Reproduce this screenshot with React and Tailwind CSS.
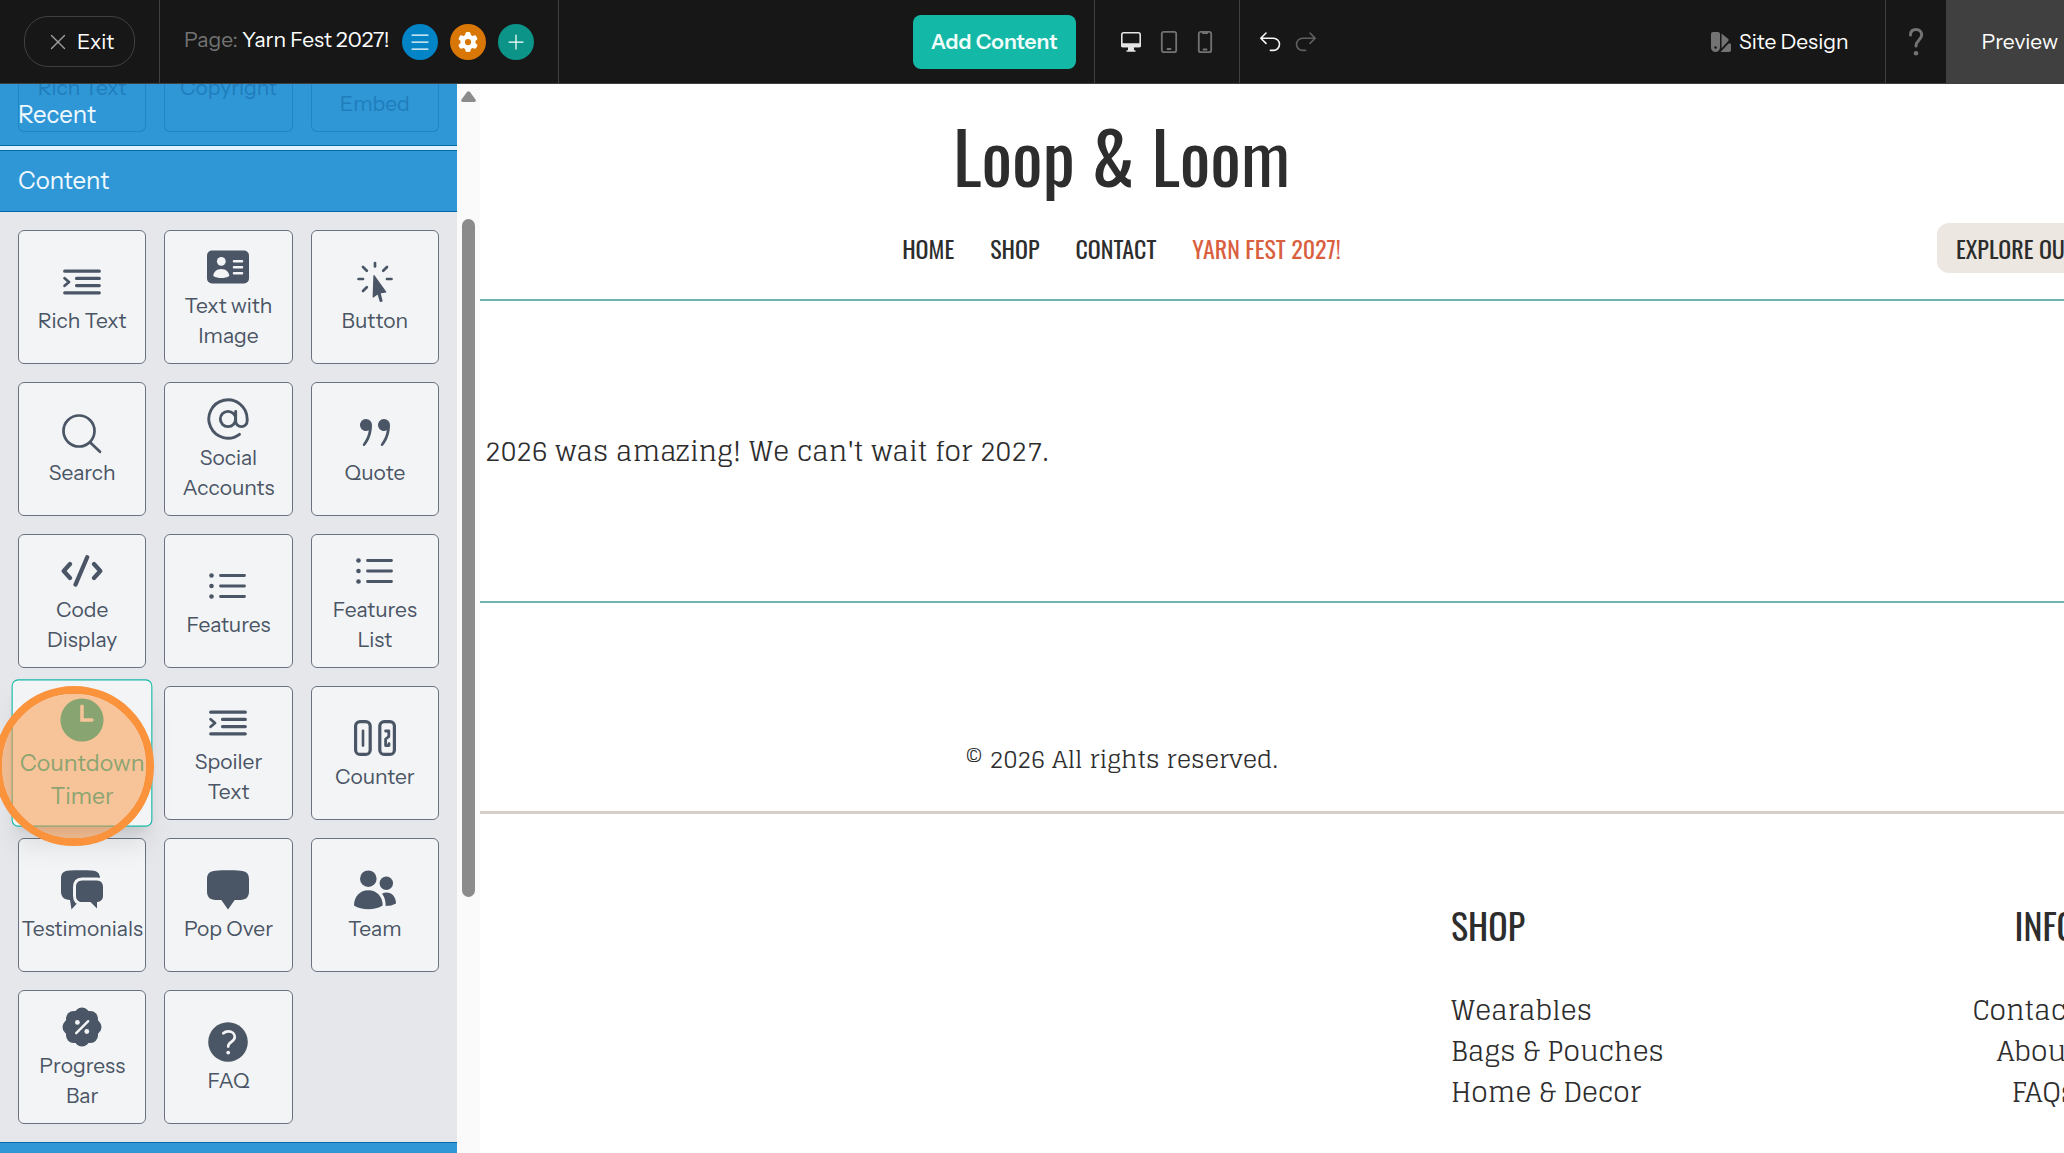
import React from 'react';
import clsx from 'clsx';
import { X, Menu, Plus, AtSign } from 'lucide-react';
import { FaGear } from 'react-icons/fa6';

const Icon = ({ children }) => (
    <svg viewBox="0 0 42 42" className="size-[42px]" fill="none" stroke="currentColor" strokeLinecap="round" strokeLinejoin="round" aria-hidden="true">
        {children}
    </svg>
);

const IndentIcon = () => (
    <Icon>
        <path d="M3.7 10.2h34.6M15.5 17.4h22.8M15.5 24.6h22.8M3.7 31.8h34.6" strokeWidth="3.2" />
        <path d="M3.6 17.2 8 21l-4.4 3.8" strokeWidth="2.8" />
    </Icon>
);

const CardIcon = () => (
    <Icon>
        <rect x="0" y="4.5" width="42" height="33" rx="5" fill="currentColor" stroke="none" />
        <circle cx="14.3" cy="15.3" r="4.4" className="fill-gray-100" stroke="none" />
        <path d="M6.3 30c0-4.2 3.6-7 8-7s8 2.8 8 7c-2.3 1.4-5 2-8 2s-5.7-.6-8-2z" className="fill-gray-100" stroke="none" />
        <path d="M27 15.2h8M27 21.2h8M27 27.2h8" strokeWidth="2.6" className="stroke-gray-100" />
    </Icon>
);

const ClickIcon = () => (
    <Icon>
        <path d="M21 2v3.5M4.5 18H9M33 18h4.5M9 6l3.8 3.8M33 6l-3.8 3.8M9 30l3.8-3.8" strokeWidth="2.7" />
        <path d="M20 14.5 31.8 31 26 32l2 8-1.6.5-2.5-8L19.2 36z" fill="currentColor" strokeWidth="1.2" />
    </Icon>
);

const SearchIcon = () => (
    <Icon>
        <circle cx="18" cy="18" r="15.5" strokeWidth="2.7" />
        <path d="M29.5 29.8 39 38.8" strokeWidth="2.7" />
    </Icon>
);

const AtIcon = () => <AtSign size={46} strokeWidth={1.5} />;

const QuoteIcon = () => (
    <Icon>
        <g fill="currentColor" stroke="none">
            <path d="M12 6a6 6 0 1 0 2.8 11.3c-.6 5-2.6 9-5.8 13.6a1.2 1.2 0 0 0 2 1.5C15.5 27.5 18 20 18 12a6 6 0 0 0-6-6z" />
            <path d="M30 6a6 6 0 1 0 2.8 11.3c-.6 5-2.6 9-5.8 13.6a1.2 1.2 0 0 0 2 1.5C33.5 27.5 36 20 36 12a6 6 0 0 0-6-6z" />
        </g>
    </Icon>
);

const CodeIcon = () => (
    <Icon>
        <path d="m9 14-6.3 7L9 28M33 14l6.3 7-6.3 7M26.2 7.2 14.5 34.6" strokeWidth="4.2" />
    </Icon>
);

const ListIcon = () => (
    <Icon>
        <path d="M13.5 10.5h24M13.5 21h24M13.5 31.5h24" strokeWidth="2.8" />
        <g fill="currentColor" stroke="none">
            <circle cx="4.5" cy="10.5" r="2.3" />
            <circle cx="4.5" cy="21" r="2.3" />
            <circle cx="4.5" cy="31.5" r="2.3" />
        </g>
    </Icon>
);

const ClockIcon = () => (
    <Icon>
        <circle cx="21" cy="21" r="19.6" fill="currentColor" stroke="none" />
        <path d="M21 8.5V21h9" strokeWidth="3.2" strokeLinejoin="miter" className="stroke-gray-100" />
    </Icon>
);

const CounterIcon = () => (
    <Icon>
        <rect x="1.6" y="4.6" width="14.6" height="32.8" rx="4.5" strokeWidth="3.2" />
        <rect x="25.8" y="4.6" width="14.6" height="32.8" rx="4.5" strokeWidth="3.2" />
        <path d="M9 13.8v14.8" strokeWidth="2.6" />
        <path d="M31.6 14h3.2v5.6l-3.2 2.4v6.6h3.4v-2" strokeWidth="2.8" />
    </Icon>
);

const ChatsIcon = () => (
    <Icon>
        <path d="M0 9.5C0 4 3 1.7 8.5 1.5c7.3-.3 14.7-.3 22 0C36 1.7 39 4 39 9.5v13c0 5.5-3 8.3-8.5 8.5H19l-8.5 9.5L9 31c-5.8-.2-9-3-9-8.5z" fill="currentColor" stroke="none" />
        <path d="M15 18c0-4 2.2-6.2 6.2-6.4 4.8-.2 9.8-.2 14.6 0 4 .2 6.2 2.4 6.2 6.4v8.5c0 4-2 6.2-6 6.4v6.6l-6.5-6.4h-8.3c-4-.2-6.2-2.4-6.2-6.4z" fill="currentColor" strokeWidth="6" className="stroke-gray-100" />
        <path d="M15 18c0-4 2.2-6.2 6.2-6.4 4.8-.2 9.8-.2 14.6 0 4 .2 6.2 2.4 6.2 6.4v8.5c0 4-2 6.2-6 6.4v6.6l-6.5-6.4h-8.3c-4-.2-6.2-2.4-6.2-6.4z" fill="currentColor" stroke="none" />
    </Icon>
);

const BubbleIcon = () => (
    <Icon>
        <path d="M0 10c0-5.5 3-8 8.5-8.3 8.3-.5 16.700-.5 25 0C39 2 42 4.5 42 10v12.5c0 5.5-3 8.2-8.5 8.5h-5.800L21 40.500 14.300 31H8.500C3 30.700 0 28 0 22.500z" fill="currentColor" stroke="none" />
    </Icon>
);

const TeamIcon = () => (
    <Icon>
        <g fill="currentColor" stroke="none">
            <circle cx="14.3" cy="9.7" r="8.3" />
            <circle cx="32.3" cy="14.3" r="6.7" />
            <path d="M0 36.5C0 27.5 6 21.3 14.3 21.3s14.400 6.200 14.400 15.200c-4 2.600-9 3.800-14.400 3.800S4 39.100 0 36.500z" />
            <path d="M28 24.700c1.500-.8 2.900-1.200 4.500-1.200 5.500 0 9.500 4.500 9.500 11-3 1.700-6.500 2.500-10.300 2.500 0-5-1-9-3.700-12.300z" />
        </g>
    </Icon>
);

const PercentIcon = () => (
    <Icon>
        <g fill="currentColor" stroke="none">
            <circle cx="21" cy="21" r="17.4" />
            <circle cx="21" cy="9" r="7.5" />
            <circle cx="29.5" cy="12.5" r="7.5" />
            <circle cx="33" cy="21" r="7.5" />
            <circle cx="29.5" cy="29.5" r="7.5" />
            <circle cx="21" cy="33" r="7.5" />
            <circle cx="12.5" cy="29.5" r="7.5" />
            <circle cx="9" cy="21" r="7.5" />
            <circle cx="12.5" cy="12.5" r="7.5" />
        </g>
        <path d="m15.2 27.2 12-12" strokeWidth="2.4" className="stroke-gray-100" />
        <g className="fill-gray-100" stroke="none">
            <circle cx="16.4" cy="16.4" r="2.4" />
            <circle cx="25.8" cy="25.5" r="2.4" />
        </g>
    </Icon>
);

const FaqIcon = () => (
    <Icon>
        <circle cx="21" cy="21" r="19.8" fill="currentColor" stroke="none" />
        <path d="M16.3 12.3c1.4-1.4 3-2 5-2 3.8 0 6.5 2.4 6.5 5.7 0 4.8-6.6 4.7-6.6 9.2v.4" strokeWidth="2.7" className="stroke-gray-100" />
        <circle cx="21.2" cy="31.6" r="1.9" className="fill-gray-100" stroke="none" />
    </Icon>
);

const contentBlocks = [
    { label: 'Rich Text', icon: IndentIcon },
    { label: 'Text with Image', icon: CardIcon },
    { label: 'Button', icon: ClickIcon },
    { label: 'Search', icon: SearchIcon },
    { label: 'Social Accounts', icon: AtIcon },
    { label: 'Quote', icon: QuoteIcon },
    { label: 'Code Display', icon: CodeIcon },
    { label: 'Features', icon: ListIcon },
    { label: 'Features List', icon: ListIcon },
    { label: 'Countdown Timer', icon: ClockIcon, active: true },
    { label: 'Spoiler Text', icon: IndentIcon },
    { label: 'Counter', icon: CounterIcon },
    { label: 'Testimonials', icon: ChatsIcon },
    { label: 'Pop Over', icon: BubbleIcon },
    { label: 'Team', icon: TeamIcon },
    { label: 'Progress Bar', icon: PercentIcon },
    { label: 'FAQ', icon: FaqIcon },
];

const recentBlocks = [
    { label: 'Rich Text', pad: 'pb-7' },
    { label: 'Copyright', pad: 'pb-7' },
    { label: 'Embed', pad: 'pb-3' },
];

const navLinks = ['HOME', 'SHOP', 'CONTACT'];
const shopLinks = ['Wearables', 'Bags & Pouches', 'Home & Decor'];
const infoLinks = ['Contact', 'About', 'FAQs'];

const BlockCard = ({ label, icon: BlockIcon, active }) => (
    <li className="relative">
        <button
            type="button"
            className={clsx(
                'flex h-[134px] w-full flex-col items-center justify-center rounded-md border bg-gray-100 text-[21px] leading-[30px]',
                active ? 'relative z-10 scale-110 border-[#14b8a6] text-[#14b8a6] shadow-xl' : 'border-gray-500 text-gray-600'
            )}
        >
            <span className="flex h-12 items-center"><BlockIcon /></span>
            <span className="max-w-[104px] min-w-min">{label}</span>
        </button>
        {active && (
            <span className="pointer-events-none absolute top-0 -left-6 z-20 size-40 rounded-full border-8 border-[#fb923c] bg-[#fb923c]/50 bg-clip-padding" />
        )}
    </li>
);

const TopBar = () => (
    <header className="flex h-[84px] shrink-0 border-b border-neutral-700 bg-[#171717] text-[21px] text-white">
        <div className="flex items-center border-r border-neutral-700 px-6">
            <button type="button" className="flex h-[51px] items-center gap-1.5 rounded-3xl border border-neutral-700 px-5">
                <X size={26} strokeWidth={1.25} className="text-neutral-400" />
                Exit
            </button>
        </div>
        <div className="flex items-center gap-3 border-r border-neutral-700 px-6">
            <p className="pb-1 whitespace-nowrap">
                <span className="text-neutral-500">Page: </span>
                Yarn Fest 2027!
            </p>
            <button type="button" aria-label="Pages" className="flex size-9 items-center justify-center rounded-full bg-[#0284c7]">
                <Menu size={24} strokeWidth={1.25} />
            </button>
            <button type="button" aria-label="Page settings" className="flex size-9 items-center justify-center rounded-full bg-[#d97706]">
                <FaGear size={20} />
            </button>
            <button type="button" aria-label="New page" className="flex size-9 items-center justify-center rounded-full bg-[#0d9488]">
                <Plus size={24} strokeWidth={1.25} />
            </button>
        </div>
        <div className="flex-9" />
        <div className="flex items-center border-r border-neutral-700 pr-[18px]">
            <button type="button" className="h-[54px] w-[163px] rounded-lg bg-[#14b8a6] font-semibold text-teal-50">
                Add Content
            </button>
        </div>
        <div className="flex items-center gap-4 border-r border-neutral-700 px-6">
            <button type="button" aria-label="Desktop view">
                <svg viewBox="0 0 24 24" className="size-6" fill="none" stroke="#e5e5e5" strokeWidth="1.6" strokeLinejoin="round" aria-hidden="true">
                    <rect x="2.8" y="2.8" width="18.4" height="13.7" rx="1.8" />
                    <path d="M3 14h18v2.5H3z" fill="#e5e5e5" />
                    <path d="M9.8 17.5h4.4v3H9.800zM7.500 21h9" fill="#e5e5e5" />
                </svg>
            </button>
            <button type="button" aria-label="Tablet view">
                <svg viewBox="0 0 20 24" className="h-6 w-5" fill="none" stroke="#737373" strokeWidth="1.8" strokeLinecap="round" aria-hidden="true">
                    <rect x="2.8" y="1.8" width="14.4" height="20.4" rx="2" />
                    <path d="M8.5 19h3" />
                </svg>
            </button>
            <button type="button" aria-label="Phone view">
                <svg viewBox="0 0 20 24" className="h-6 w-5" fill="none" stroke="#737373" strokeWidth="1.8" strokeLinecap="round" aria-hidden="true">
                    <rect x="3.8" y="1.8" width="12.4" height="20.4" rx="2" />
                    <path d="M8.5 19.5h3M8 2v1.2h4V2" />
                </svg>
            </button>
        </div>
        <div className="flex items-center gap-3 pl-[18px]">
            <button type="button" aria-label="Undo">
                <svg viewBox="0 0 24 24" className="size-6" fill="none" stroke="#f5f5f5" strokeWidth="1.6" strokeLinecap="round" strokeLinejoin="round" aria-hidden="true">
                    <path d="M8 3 2.8 8.2 8 13.4M3 8.2h12.4a6.1 6.1 0 0 1 0 12.2h-3" />
                </svg>
            </button>
            <button type="button" aria-label="Redo">
                <svg viewBox="0 0 24 24" className="size-6" fill="none" stroke="#606060" strokeWidth="1.6" strokeLinecap="round" strokeLinejoin="round" aria-hidden="true">
                    <path d="m16 3 5.2 5.2-5.2 5.2M21 8.2H8.6a6.1 6.1 0 0 0 0 12.2h3" />
                </svg>
            </button>
        </div>
        <div className="flex-10" />
        <button type="button" className="flex items-center gap-2 border-r border-neutral-700 pr-9 whitespace-nowrap">
            <svg viewBox="0 0 20 20" className="size-5 text-neutral-500" fill="currentColor" aria-hidden="true">
                <path fillRule="evenodd" d="M2 0h5a2 2 0 0 1 2 2v13.5a4.5 4.5 0 0 1-9 0V2a2 2 0 0 1 2-2zm2.5 14.2a1.3 1.3 0 1 0 0 2.6 1.3 1.3 0 0 0 0-2.6z" />
                <path d="M10.5 1.5 17 6.8c.8.7.8 1.500.2 2.200l-6.700 7.500zM19 11.500c.6 0 1 .4 1 1V18a2 2 0 0 1-2 2h-8.500l8-8.500z" />
            </svg>
            Site Design
        </button>
        <button type="button" aria-label="Help" className="flex w-[60px] items-center justify-center">
            <svg viewBox="0 0 16 30" className="h-[30px] w-4 text-neutral-500" fill="none" stroke="currentColor" strokeWidth="3" strokeLinecap="round" aria-hidden="true">
                <path d="M2.5 8C2.5 4.5 4.5 2.5 8 2.5s5.7 2.200 5.700 5.300c0 5-5.700 5.500-5.700 11.200" />
                <circle cx="8" cy="26.2" r="2.3" fill="currentColor" stroke="none" />
            </svg>
        </button>
        <button type="button" className="bg-[#404040] pr-1.5 pl-9">Preview</button>
    </header>
);

const Sidebar = () => (
    <aside className="w-[457px] shrink-0 overflow-hidden bg-gray-200">
        <section className="relative h-[62px] overflow-hidden border-b border-sky-700 bg-[#2f97d6] px-[18px]">
            <ul className="grid grid-cols-3 gap-[18px] text-[21px] leading-[30px] text-[#1f7dbb]">
                {recentBlocks.map(block => (
                    <li
                        key={block.label}
                        className={clsx('flex h-12 items-end justify-center rounded-b-md border border-t-0 border-[#2084c5]', block.pad)}
                    >
                        {block.label}
                    </li>
                ))}
            </ul>
            <h2 className="absolute bottom-3.5 left-[18px] text-2xl text-sky-50">Recent</h2>
        </section>
        <div className="h-1 bg-sky-100" />
        <section>
            <h2 className="flex h-[62px] items-center border-y border-sky-700 bg-[#2f97d6] px-[18px] text-2xl text-sky-50">Content</h2>
            <ul className="grid grid-cols-3 gap-[18px] p-[18px]">
                {contentBlocks.map(block => (
                    <BlockCard key={block.label} {...block} />
                ))}
            </ul>
        </section>
        <div className="h-[62px] border-t border-sky-700 bg-[#2f97d6]" />
    </aside>
);

const ScrollTrack = () => (
    <div className="flex w-[23px] shrink-0 flex-col items-center bg-neutral-50 pt-[7px]">
        <svg viewBox="0 0 15 11" className="h-[11px] w-[15px] text-[#8b8b8b]" fill="currentColor" aria-hidden="true">
            <path d="M6 1a2 2 0 0 1 3 0l5.5 7.5c.8 1.2.2 2.5-1.3 2.5H1.8C.3 11-.3 9.7.5 8.5z" />
        </svg>
        <div className="mt-[117px] h-[678px] w-[13px] rounded-full bg-[#8b8b8b]" />
    </div>
);

const SitePreview = () => (
    <main className="min-w-0 flex-1 overflow-hidden bg-white font-[Glegoo,'DejaVu_Serif_Condensed',serif] text-[#2d2d2d]">
        <div className="border-b-2 border-[#6fb3b3] pt-[31px] pb-[26px] font-[Oswald,Roboto,sans-serif]">
            <h1 className="w-[81%] text-center text-[72px] leading-[80px]">Loop &amp; Loom</h1>
            <div className="mt-7 grid grid-cols-[81%_1fr] items-center">
                <nav className="flex justify-center gap-9 text-2xl">
                    {navLinks.map(link => (
                        <a key={link} href="#">{link}</a>
                    ))}
                    <a href="#" className="text-[#d9603f]">YARN FEST 2027!</a>
                </nav>
                <div className="pl-[174px]">
                    <a href="#" className="flex h-[50px] w-max items-center rounded-xl bg-[#ece7e1] px-[19px] text-2xl">EXPLORE OUR</a>
                </div>
            </div>
        </div>
        <p className="border-b-2 border-[#6fb3b3] py-[130px] pl-[5px] text-[27px] leading-10">
            2026 was amazing! We can't wait for 2027.
        </p>
        <div className="border-b-[3px] border-[#d6cfc7] pt-[137px] pb-[31px]">
            <p className="w-[81%] text-center text-2xl leading-10">© 2026 All rights reserved.</p>
        </div>
        <footer className="-mr-3 flex justify-between pt-[89px] pl-[971px]">
            <div>
                <h3 className="font-[Oswald,Roboto,sans-serif] text-4xl leading-[44px]">SHOP</h3>
                <ul className="mt-[43px] text-[27px] leading-[41px] whitespace-nowrap">
                    {shopLinks.map(link => (
                        <li key={link}><a href="#" className="block">{link}</a></li>
                    ))}
                </ul>
            </div>
            <div className="text-right">
                <h3 className="font-[Oswald,Roboto,sans-serif] text-4xl leading-[44px]">INFO</h3>
                <ul className="mt-[43px] text-[27px] leading-[41px]">
                    {infoLinks.map(link => (
                        <li key={link}><a href="#" className="block">{link}</a></li>
                    ))}
                </ul>
            </div>
        </footer>
    </main>
);

const App = () => (
    <div className="flex h-screen flex-col overflow-hidden font-['Instrument_Sans',Inter,sans-serif]">
        <TopBar />
        <div className="flex min-h-0 flex-1">
            <Sidebar />
            <ScrollTrack />
            <SitePreview />
        </div>
    </div>
);

export default App;
